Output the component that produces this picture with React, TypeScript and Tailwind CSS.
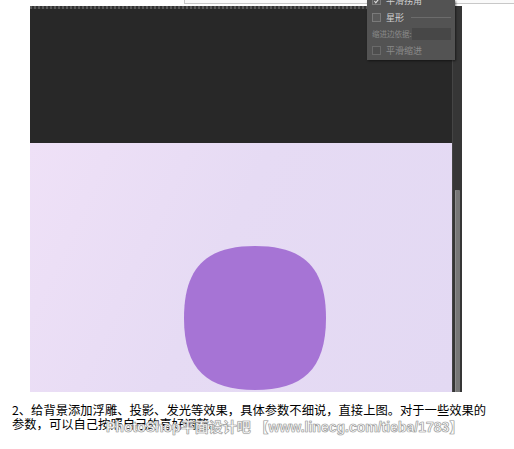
import React from "react";

function Checkbox({ checked = false, dim = false }: { checked?: boolean; dim?: boolean }) {
  return (
    <span
      className={`flex h-[9px] w-[9px] shrink-0 items-center justify-center border ${
        dim ? "border-[#6a6a6a] bg-[#4e4e4e]" : "border-[#7a7a7a] bg-[#5a5a5a]"
      }`}
    >
      {checked && (
        <svg viewBox="0 0 10 10" className="h-[8px] w-[8px]">
          <path d="M2 5 L4 7.5 L8 2.5" stroke="#dcdcdc" strokeWidth="1.6" fill="none" />
        </svg>
      )}
    </span>
  );
}

function OptionsPanel() {
  return (
    <div className="absolute left-[367px] top-0 flex h-[60px] w-[88px] flex-col whitespace-nowrap bg-[#535353] pl-[5px] pr-[4px] text-[9px] leading-none text-[#d0d0d0] shadow-[1px_1px_2px_rgba(0,0,0,0.5)]">
      <div className="-mt-[4px] flex h-[9px] items-center gap-[5px]">
        <Checkbox checked />
        <span>平滑拐角</span>
      </div>
      <div className="mt-[7px] flex h-[10px] items-center gap-[5px]">
        <Checkbox />
        <span>星形</span>
        <span className="ml-[2px] h-px flex-1 bg-[#6c6c6c]" />
      </div>
      <div className="mt-[6px] flex h-[12px] items-center justify-between">
        <span className="text-[7.5px] text-[#8a8a8a]">缩进边依据:</span>
        <span className="h-[12px] w-[39px] bg-[#474747]" />
      </div>
      <div className="mt-[5px] flex h-[10px] items-center gap-[5px] text-[#8a8a8a]">
        <Checkbox dim />
        <span>平滑缩进</span>
      </div>
    </div>
  );
}

function Squircle() {
  return (
    <svg viewBox="0 0 142 144" className="h-[144px] w-[142px]">
      <path
        d="M71 0 C118 0 142 20 142 72 C142 124 118 144 71 144 C24 144 0 124 0 72 C0 20 24 0 71 0 Z"
        fill="#a674d5"
      />
    </svg>
  );
}

export default function App() {
  return (
    <div
      className="relative h-[449px] w-[514px] overflow-hidden bg-white"
      style={{ fontFamily: '"Noto Sans CJK SC", "Noto Sans", sans-serif' }}
    >
      {/* top strip */}
      <div className="flex h-[6px]">
        <div className="ml-[184px] flex h-[4px] flex-1 border-b border-l border-[#c8c8c8] bg-[#fafafa]">
          <div className="ml-[243px] h-full w-[7px] border-x border-[#d0d0d0]" />
        </div>
      </div>

      {/* workspace */}
      <div className="ml-[30px] flex w-[432px]">
        <div className="flex w-[422px] flex-col">
          <div className="h-[3px] bg-[repeating-linear-gradient(90deg,#5a5a5a_0px,#5a5a5a_2px,#333_2px,#333_4px)]" />
          <div className="h-[134px] bg-[#282828]" />
          <div className="h-[249px] bg-[linear-gradient(115deg,#efe1f7_0%,#e6dbf4_45%,#e3d9f3_100%)] pl-[154px] pt-[103px]">
            <Squircle />
          </div>
        </div>
        <div className="relative h-[386px] w-[10px] border-l border-[#454545] bg-[#363636]">
          <div className="absolute left-[2px] top-[184px] h-[202px] w-[5px] rounded-t-[1px] bg-[#777] shadow-[inset_1px_0_0_#8d8d8d]" />
        </div>
      </div>

      <OptionsPanel />

      {/* caption */}
      <div className="px-[12px] pt-[11px] text-[12.3px] leading-[14px] text-black">
        <p>2、给背景添加浮雕、投影、发光等效果，具体参数不细说，直接上图。对于一些效果的</p>
        <p>参数，可以自己按照自己的喜好调整。</p>
      </div>

      {/* watermark */}
      <div
        className="absolute left-[106px] top-[420px] whitespace-nowrap text-[14px] font-bold leading-none text-white"
        style={{
          fontFamily: '"Liberation Sans", "Noto Sans CJK SC", sans-serif',
          WebkitTextStroke: "0.6px #9a9a9a",
          textShadow: "0 0 1px #aaa",
        }}
      >
        PhotoShop平面设计吧 【www.linecg.com/tieba/1783】
      </div>
    </div>
  );
}
